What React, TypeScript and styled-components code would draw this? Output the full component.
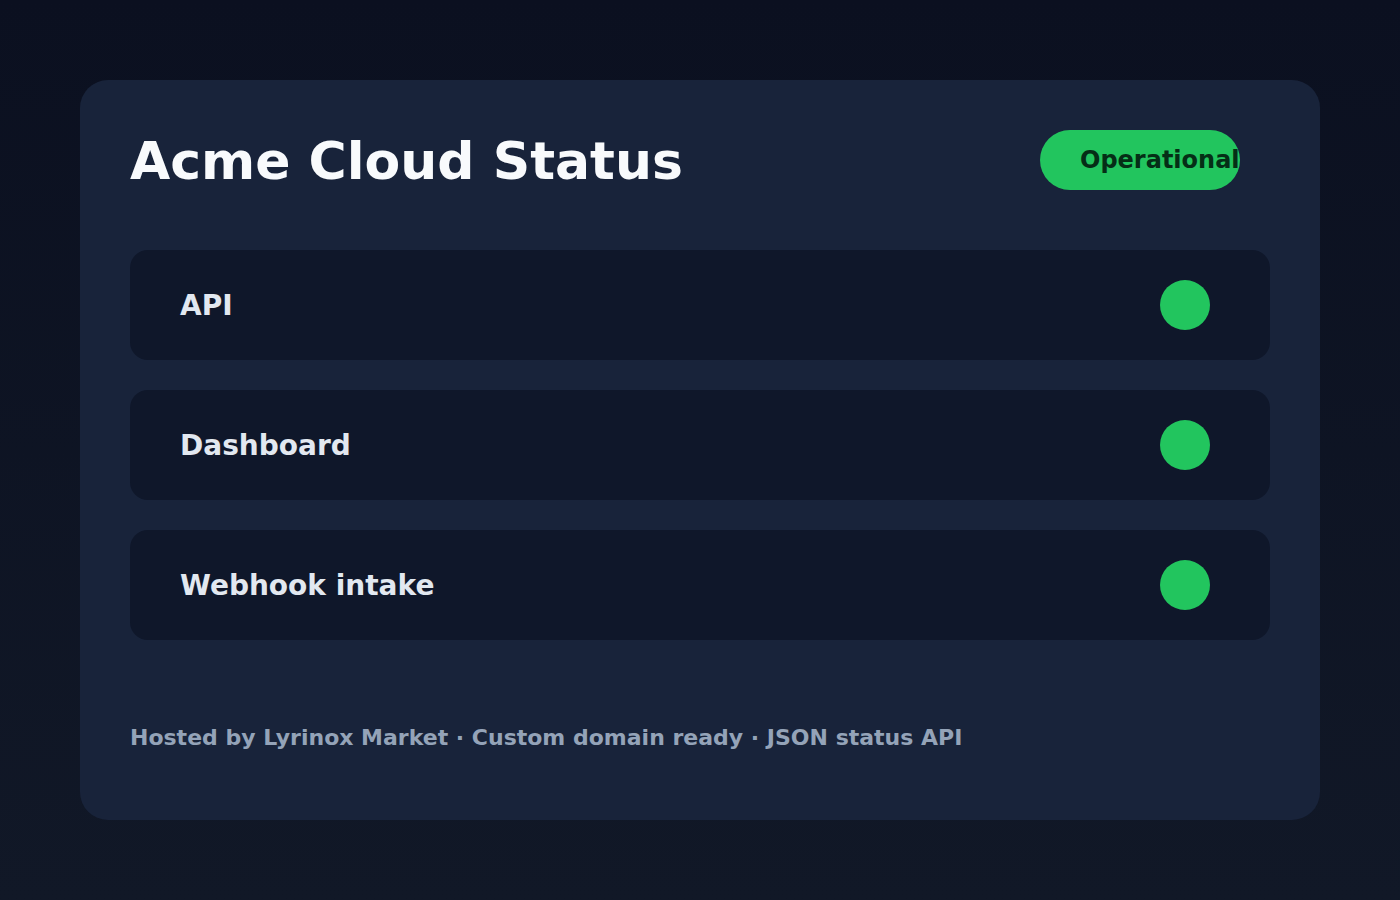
import React from "react";
import styled, { createGlobalStyle } from "styled-components";

const GlobalStyle = createGlobalStyle`
  html, body {
    margin: 0;
    padding: 0;
  }
  body {
    min-height: 900px;
    background: linear-gradient(180deg, #0b1020 0%, #111827 100%);
    font-family: "DejaVu Sans", "Noto Sans", sans-serif;
  }
`;

const Page = styled.main`
  box-sizing: border-box;
  min-height: 900px;
  padding: 80px;
`;

const Card = styled.section`
  box-sizing: border-box;
  height: 740px;
  background: #18233a;
  border-radius: 28px;
  padding: 50px 50px;
  display: flex;
  flex-direction: column;
`;

const Header = styled.header`
  display: flex;
  align-items: center;
  justify-content: space-between;
  height: 60px;
  margin-bottom: 60px;
  padding-right: 30px;
`;

const Title = styled.h1`
  margin: 2px 0 0;
  color: #f8fafc;
  font-size: 52px;
  font-weight: 700;
`;

const Badge = styled.span`
  box-sizing: border-box;
  width: 200px;
  height: 60px;
  border-radius: 30px;
  background: #22c55e;
  color: #052e16;
  font-size: 24px;
  font-weight: 700;
  padding: 0 40px;
  display: flex;
  align-items: center;
  white-space: nowrap;
`;

const List = styled.ul`
  list-style: none;
  margin: 0;
  padding: 0;
  display: flex;
  flex-direction: column;
  gap: 30px;
`;

const Row = styled.li`
  box-sizing: border-box;
  height: 110px;
  background: #0f172a;
  border-radius: 18px;
  padding: 0 60px 0 50px;
  display: flex;
  align-items: center;
  justify-content: space-between;
`;

const Name = styled.span`
  color: #e2e8f0;
  font-size: 28px;
  font-weight: 700;
`;

const Dot = styled.span<{ $color: string }>`
  width: 50px;
  height: 50px;
  border-radius: 50%;
  background: ${(p) => p.$color};
`;

const Footer = styled.footer`
  margin-top: auto;
  margin-bottom: 20px;
  color: #94a3b8;
  font-size: 22px;
  font-weight: 700;
`;

const services = ["API", "Dashboard", "Webhook intake"];

export default function App() {
  return (
    <>
      <GlobalStyle />
      <Page>
        <Card>
          <Header>
            <Title>Acme Cloud Status</Title>
            <Badge>Operational</Badge>
          </Header>
          <List>
            {services.map((s) => (
              <Row key={s}>
                <Name>{s}</Name>
                <Dot $color="#22c55e" />
              </Row>
            ))}
          </List>
          <Footer>Hosted by Lyrinox Market · Custom domain ready · JSON status API</Footer>
        </Card>
      </Page>
    </>
  );
}
